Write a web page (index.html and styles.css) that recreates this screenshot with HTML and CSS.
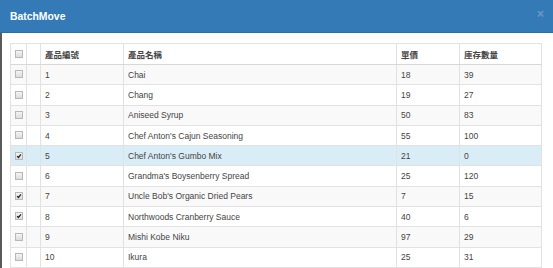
FILE: index.html
```html
<!DOCTYPE html>
<html>
<head>
	<title>BatchMove</title>
	<link rel="stylesheet" href="styles.css">
</head>
<body>
	<div class="modal">
		<div class="modal-header">
			<h4 class="modal-title">BatchMove</h4>
			<span class="close">&times;</span>
		</div>
		<div class="modal-body">
			<table class="grid">
				<colgroup>
					<col class="c-check"><col class="c-blank"><col class="c-id"><col class="c-name"><col class="c-price"><col class="c-stock">
				</colgroup>
				<thead>
					<tr><th class="chk"><span class="cb"></span></th><th></th><th>產品編號</th><th>產品名稱</th><th>單價</th><th>庫存數量</th></tr>
				</thead>
				<tbody>
					<tr><td class="chk"><span class="cb"></span></td><td></td><td>1</td><td>Chai</td><td>18</td><td>39</td></tr>
					<tr><td class="chk"><span class="cb"></span></td><td></td><td>2</td><td>Chang</td><td>19</td><td>27</td></tr>
					<tr><td class="chk"><span class="cb"></span></td><td></td><td>3</td><td>Aniseed Syrup</td><td>50</td><td>83</td></tr>
					<tr><td class="chk"><span class="cb"></span></td><td></td><td>4</td><td>Chef Anton's Cajun Seasoning</td><td>55</td><td>100</td></tr>
					<tr class="active"><td class="chk"><span class="cb on"><svg viewBox="0 0 8 8"><path d="M1.5 4.2 L3.2 6 L6.6 1.8" /></svg></span></td><td></td><td>5</td><td>Chef Anton's Gumbo Mix</td><td>21</td><td>0</td></tr>
					<tr><td class="chk"><span class="cb"></span></td><td></td><td>6</td><td>Grandma's Boysenberry Spread</td><td>25</td><td>120</td></tr>
					<tr><td class="chk"><span class="cb on"><svg viewBox="0 0 8 8"><path d="M1.5 4.2 L3.2 6 L6.6 1.8" /></svg></span></td><td></td><td>7</td><td>Uncle Bob's Organic Dried Pears</td><td>7</td><td>15</td></tr>
					<tr><td class="chk"><span class="cb on"><svg viewBox="0 0 8 8"><path d="M1.5 4.2 L3.2 6 L6.6 1.8" /></svg></span></td><td></td><td>8</td><td>Northwoods Cranberry Sauce</td><td>40</td><td>6</td></tr>
					<tr><td class="chk"><span class="cb"></span></td><td></td><td>9</td><td>Mishi Kobe Niku</td><td>97</td><td>29</td></tr>
					<tr><td class="chk"><span class="cb"></span></td><td></td><td>10</td><td>Ikura</td><td>25</td><td>31</td></tr>
				</tbody>
			</table>
		</div>
	</div>
</body>
</html>
```

FILE: styles.css
```css
body { padding:0; margin:0; background: #FFFFFF; font-family: "Liberation Sans", Arial, "Noto Sans CJK TC", sans-serif; color: #444444; }

.modal { width: 553px; height: 268px; overflow: hidden; }
.modal-header { height: 32px; background: #337AB7; border-bottom: 1px solid #2E6DA4; display: flex; align-items: center; justify-content: space-between; padding: 0 10px 0 10px; }
.modal-title { margin: 0; color: #FFFFFF; font-size: 10.4px; font-weight: bold; }
.close { color: #6F97C2; font-size: 12px; font-weight: bold; line-height: 1; margin-top: -4px; margin-right: -1px; }

.modal-body { border-left: 2px solid #5A5A5A; padding: 10px 0 0 8px; height: 240px; }

.grid { border-collapse: collapse; table-layout: fixed; width: 531px; font-size: 8.5px; }
.grid th, .grid td { border: 1px solid #E2E2E2; height: 19.3px; padding: 0 4px; text-align: left; white-space: nowrap; }
.grid th { font-weight: bold; color: #444444; height: 20px; border-bottom: 1px solid #D8D8D8; }
.grid tbody tr:nth-child(odd) td { background: #F9F9F9; }
.grid tbody tr.active td { background: #D9EDF7; }

.c-check { width: 16px; }
.c-blank { width: 14px; }
.c-id { width: 83px; }
.c-name { width: 273px; }
.c-price { width: 63px; }
.c-stock { width: 82px; }

.grid .chk { padding: 0; text-align: center; }
.cb { display: inline-block; width: 6px; height: 6px; border: 1px solid #B8B8B8; background: linear-gradient(#F4F4F4, #DCDCDC); vertical-align: middle; position: relative; top: -1px; }
.cb svg { display: block; width: 6px; height: 6px; }
.cb svg path { fill: none; stroke: #222222; stroke-width: 1.6; }
```
